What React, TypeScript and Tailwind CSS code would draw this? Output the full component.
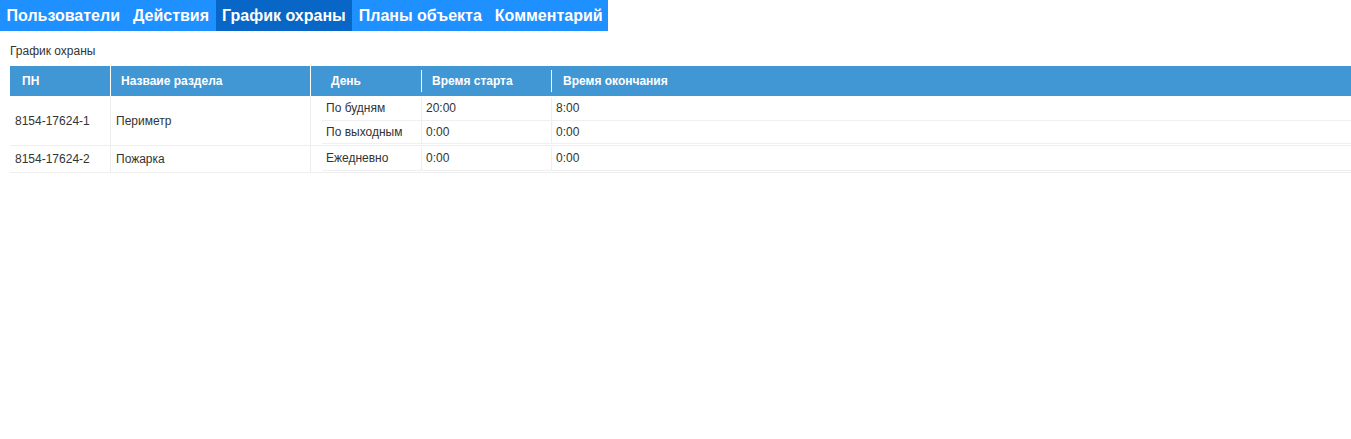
import React from "react";

type Slot = { day: string; start: string; end: string };
type Section = { pn: string; name: string; slots: Slot[] };

const tabs = ["Пользователи", "Действия", "График охраны", "Планы объекта", "Комментарий"];

const sections: Section[] = [
  {
    pn: "8154-17624-1",
    name: "Периметр",
    slots: [
      { day: "По будням", start: "20:00", end: "8:00" },
      { day: "По выходным", start: "0:00", end: "0:00" },
    ],
  },
  {
    pn: "8154-17624-2",
    name: "Пожарка",
    slots: [{ day: "Ежедневно", start: "0:00", end: "0:00" }],
  },
];

export default function App() {
  const active = "График охраны";

  return (
    <div className="min-h-[439px] bg-white text-[#333] font-['Liberation_Sans',Arial,sans-serif]">
      {/* Tabs */}
      <div className="flex w-[608px] h-[31px] bg-[#1e90ff]">
        {tabs.map((t) => (
          <div
            key={t}
            className={
              t === active
                ? "shrink-0 whitespace-nowrap flex items-center px-[6.5px] bg-[#0866c6] text-white font-bold text-[16px]"
                : "shrink-0 whitespace-nowrap flex items-center px-[6.5px] text-white font-bold text-[16px]"
            }
          >
            {t}
          </div>
        ))}
      </div>

      <div className="pl-[10px] pt-[13px] text-[12px] leading-[15px]">График охраны</div>

      {/* Table */}
      <div className="ml-[10px] mt-[7px] text-[12px]">
        <div className="flex h-[30px] bg-[#4196d4] text-white font-bold">
          <div className="w-[100px] flex items-center pl-[12px]">ПН</div>
          <div className="w-[200px] flex items-center pl-[10px] border-l border-white">Назваие раздела</div>
          <div className="w-[111px] flex items-center pl-[20px] border-l border-white">День</div>
          <div className="w-[130px] flex items-center py-[4px]">
            <div className="h-full border-l border-white" />
            <span className="pl-[10px]">Время старта</span>
          </div>
          <div className="flex-1 flex items-center py-[4px]">
            <div className="h-full border-l border-white" />
            <span className="pl-[11px]">Время окончания</span>
          </div>
        </div>

        {sections.map((s) => (
          <div key={s.pn} className="flex border-b border-[#eeeeee]">
            <div className="w-[100px] flex items-center pl-[5px]">{s.pn}</div>
            <div className="w-[200px] flex items-center pl-[5px] border-l border-[#eeeeee]">{s.name}</div>
            <div className="flex-1 border-l border-[#eeeeee] pl-[11px] py-[1px]">
              {s.slots.map((sl) => (
                <div key={sl.day} className="flex h-[23.5px] border-b border-[#f0f0f0]">
                  <div className="w-[99px] flex items-center pl-[4px]">{sl.day}</div>
                  <div className="w-[130px] flex items-center pl-[4px] border-l border-[#eeeeee]">{sl.start}</div>
                  <div className="flex-1 flex items-center pl-[4px] border-l border-[#eeeeee]">{sl.end}</div>
                </div>
              ))}
            </div>
          </div>
        ))}
      </div>
    </div>
  );
}
